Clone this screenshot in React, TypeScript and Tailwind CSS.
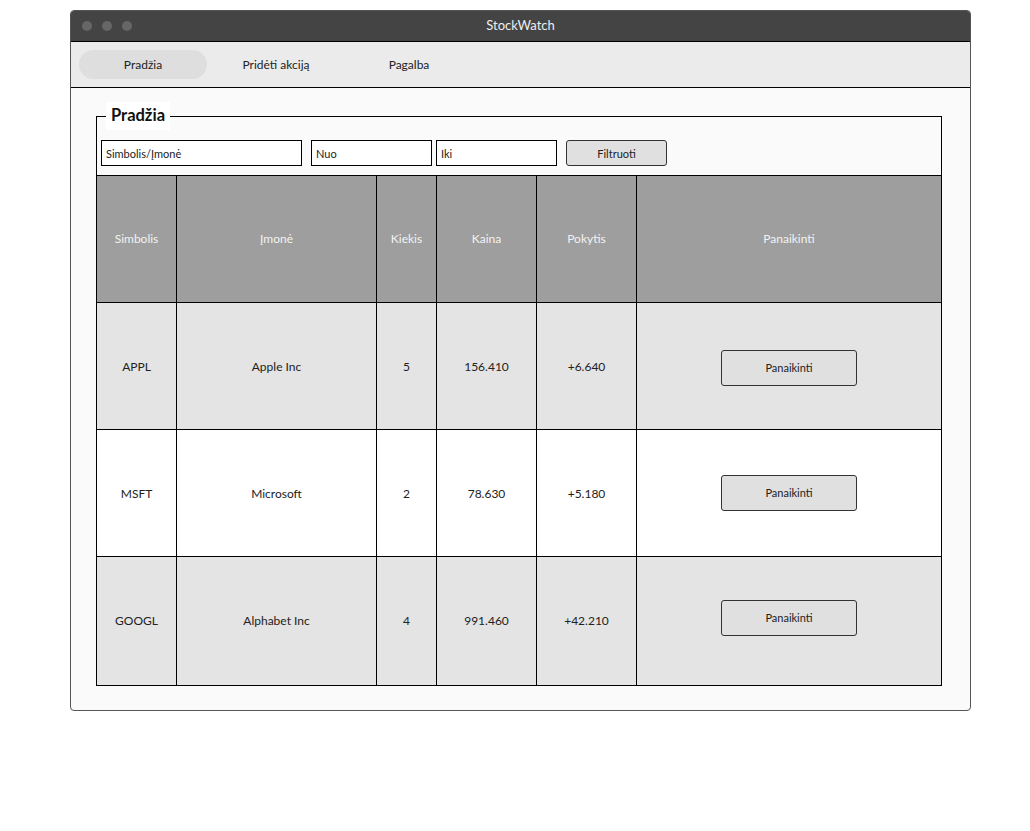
import React, { useState } from 'react';

interface Stock {
  symbol: string;
  company: string;
  qty: number;
  price: string;
  change: string;
}

const stocks: Stock[] = [
  { symbol: 'APPL', company: 'Apple Inc', qty: 5, price: '156.410', change: '+6.640' },
  { symbol: 'MSFT', company: 'Microsoft', qty: 2, price: '78.630', change: '+5.180' },
  { symbol: 'GOOGL', company: 'Alphabet Inc', qty: 4, price: '991.460', change: '+42.210' },
];

const tabs = ['Pradžia', 'Pridėti akciją', 'Pagalba'];

// the mockup's delete buttons drift a few px up row by row
const btnOffset = ['mt-[4px]', 'mt-0', 'mt-[-6px]'];

const App: React.FC = () => {
  const [active, setActive] = useState(0);
  const [rows, setRows] = useState(stocks);

  const cell = 'border border-black text-center align-middle';

  return (
    <div className="min-h-screen bg-white pl-[70px] pt-[10px] font-['Lato',sans-serif] text-[12px] text-[#222]">
      <div className="w-[901px] h-[701px] rounded-[4px] border border-[#555] bg-[#fafafa] overflow-hidden flex flex-col">
        {/* title bar */}
        <div className="relative h-[31px] bg-[#444] flex items-center justify-center border-b border-black">
          <div className="absolute left-[11px] top-[10px] flex gap-[10px]">
            <span className="w-[10px] h-[10px] rounded-full bg-[#666]" />
            <span className="w-[10px] h-[10px] rounded-full bg-[#666]" />
            <span className="w-[10px] h-[10px] rounded-full bg-[#666]" />
          </div>
          <span className="text-[#eee] text-[13px]">StockWatch</span>
        </div>

        {/* tabs */}
        <div className="h-[46px] bg-[#ebebeb] border-b border-black flex items-center gap-[5px] pl-[8px]">
          {tabs.map((t, i) => (
            <button
              key={t}
              onClick={() => setActive(i)}
              className={`w-[128px] h-[29px] rounded-full text-[12px] text-[#222] ${active === i ? 'bg-[#dedede]' : ''}`}
            >
              {t}
            </button>
          ))}
        </div>

        {/* content */}
        <div className="pl-[25px] pt-[14px]">
          <fieldset className="w-[846px] border border-black p-0 m-0">
            <legend className="ml-[9px] px-[5px] h-[28px] bg-white text-[16.5px] font-bold leading-[26px] text-[#111]">
              Pradžia
            </legend>
            <div className="flex items-center px-[4px] pt-[10px] pb-[9px]">
              <input
                placeholder="Simbolis/Įmonė"
                className="w-[201px] h-[26px] border border-black bg-white px-[4px] text-[11px] placeholder:text-[#222] outline-none"
              />
              <input
                placeholder="Nuo"
                className="ml-[9px] w-[121px] h-[26px] border border-black bg-white px-[4px] text-[11px] placeholder:text-[#222] outline-none"
              />
              <input
                placeholder="Iki"
                className="ml-[4px] w-[121px] h-[26px] border border-black bg-white px-[4px] text-[11px] placeholder:text-[#222] outline-none"
              />
              <button className="ml-[9px] w-[101px] h-[26px] rounded-[3px] border border-[#333] bg-[#e0e0e0] text-[11px] pt-[2px]">
                Filtruoti
              </button>
            </div>
            <table className="-mx-px -mb-px w-[846px] table-fixed border-collapse">
              <colgroup>
                <col className="w-[80px]" />
                <col className="w-[200px]" />
                <col className="w-[60px]" />
                <col className="w-[100px]" />
                <col className="w-[100px]" />
                <col />
              </colgroup>
              <thead>
                <tr className="h-[127px] bg-[#9e9e9e] text-[#f2f2f2]">
                  <th className={`${cell} font-normal`}>Simbolis</th>
                  <th className={`${cell} font-normal`}>Įmonė</th>
                  <th className={`${cell} font-normal`}>Kiekis</th>
                  <th className={`${cell} font-normal`}>Kaina</th>
                  <th className={`${cell} font-normal`}>Pokytis</th>
                  <th className={`${cell} font-normal`}>Panaikinti</th>
                </tr>
              </thead>
              <tbody>
                {rows.map((s, i) => {
                  const last = i === rows.length - 1;
                  const pad = last ? '' : 'pt-[1px]';
                  return (
                    <tr
                      key={s.symbol}
                      className={`${last ? 'h-[129px]' : 'h-[127px]'} ${i % 2 === 0 ? 'bg-[#e4e4e4]' : 'bg-white'}`}
                    >
                      <td className={`${cell} ${pad}`}>{s.symbol}</td>
                      <td className={`${cell} ${pad}`}>{s.company}</td>
                      <td className={`${cell} ${pad}`}>{s.qty}</td>
                      <td className={`${cell} ${pad}`}>{s.price}</td>
                      <td className={`${cell} ${pad}`}>{s.change}</td>
                      <td className={cell}>
                        <button
                          onClick={() => setRows(rows.filter((r) => r.symbol !== s.symbol))}
                          className={`w-[136px] h-[36px] rounded-[3px] border border-[#333] bg-[#e0e0e0] text-[11px] ${btnOffset[i] ?? 'mt-0'}`}
                        >
                          Panaikinti
                        </button>
                      </td>
                    </tr>
                  );
                })}
              </tbody>
            </table>
          </fieldset>
        </div>
      </div>
    </div>
  );
};

export default App;
